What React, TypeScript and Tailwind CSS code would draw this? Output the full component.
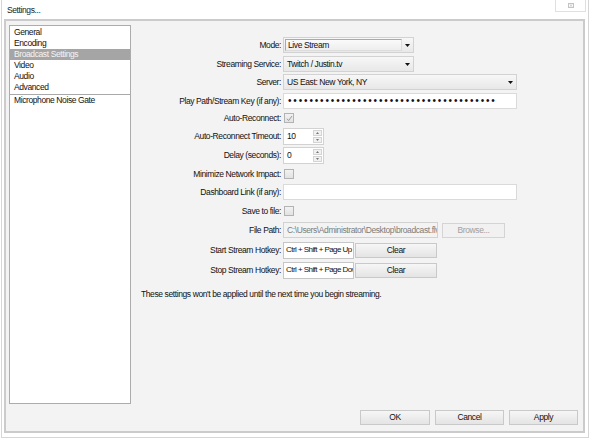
import React from 'react';

const font = { fontFamily: '"Liberation Sans", Arial, sans-serif' };

function Arrow() {
  return (
    <svg width="5" height="3" viewBox="0 0 5 3" className="block">
      <path d="M0 0h5L2.5 3z" fill="#111" />
    </svg>
  );
}

function Combo({ text, width, editable }: { text: string; width: string; editable?: boolean }) {
  return (
    <div className={`${width} h-[16px] flex items-stretch border border-[#d2d2d2] bg-gradient-to-b from-[#f7f7f7] to-[#e8e8e8]`}>
      {editable ? (
        <div className="w-[117px] my-[1px] ml-[1px] border border-[#a9a9a9] border-r-[#dcdcdc] border-b-[#dcdcdc] bg-gradient-to-b from-[#fafafa] to-[#eeeeee] flex items-center pl-[2px]">
          {text}
        </div>
      ) : (
        <div className="flex-1 flex items-center pl-[3px]">{text}</div>
      )}
      <div className={`${editable ? 'flex-1' : 'w-[12px]'} flex items-center justify-center`}>
        <Arrow />
      </div>
    </div>
  );
}

function Check({ checked }: { checked?: boolean }) {
  return (
    <div className="ml-[1px] w-[10px] h-[10px] border border-[#b3b3b3] bg-gradient-to-b from-[#f2f2f2] to-[#e2e2e2] flex items-center justify-center">
      {checked && (
        <svg width="7" height="7" viewBox="0 0 7 7">
          <path d="M1 3.8L2.6 5.6L6 1" fill="none" stroke="#9a9a9a" strokeWidth="1" />
        </svg>
      )}
    </div>
  );
}

function Spin({ value }: { value: string }) {
  return (
    <div className="w-[41px] h-[17px] flex border border-[#d2d2d2] bg-white">
      <div className="w-[28px] flex items-center pl-[3px]">{value}</div>
      <div className="flex-1 flex flex-col gap-[1px] p-[1px]">
        <div className="flex-1 border border-[#d4d4d4] bg-[#f1f1f1] flex items-center justify-center">
          <svg width="3" height="2" viewBox="0 0 3 2"><path d="M0 2h3L1.5 0z" fill="#777" /></svg>
        </div>
        <div className="flex-1 border border-[#d4d4d4] bg-[#f1f1f1] flex items-center justify-center">
          <svg width="3" height="2" viewBox="0 0 3 2"><path d="M0 0h3L1.5 2z" fill="#777" /></svg>
        </div>
      </div>
    </div>
  );
}

function Btn({ children, width, disabled }: { children: React.ReactNode; width: string; disabled?: boolean }) {
  return (
    <div
      className={`${width} h-[15px] flex items-center justify-center border ${
        disabled
          ? 'border-[#d4d4d4] bg-[#f1f1f1] text-[#a0a0a0]'
          : 'border-[#c9c9c9] bg-gradient-to-b from-[#f6f6f6] to-[#e4e4e4] text-[#111]'
      }`}
    >
      {children}
    </div>
  );
}

function Row({ label, mt, children }: { label: string; mt: string; children: React.ReactNode }) {
  return (
    <div className={`flex items-center h-[16px] ${mt}`}>
      <div className="w-[150px] text-right whitespace-nowrap">{label}</div>
      <div className="ml-[2px] flex items-center">{children}</div>
    </div>
  );
}

function Hotkey({ text }: { text: string }) {
  return (
    <div className="w-[71px] h-[17px] border border-[#c6c6c6] bg-white flex items-center pl-[2px] overflow-hidden whitespace-nowrap text-[8px] tracking-[-0.55px]">
      {text}
    </div>
  );
}

const pages = ['General', 'Encoding', 'Broadcast Settings', 'Video', 'Audio', 'Advanced'];

export default function App() {
  return (
    <div
      className="w-[590px] h-[439px] bg-white px-[1px] pb-[1px] text-[8.5px] tracking-[-0.4px] text-[#111] leading-none"
      style={font}
    >
      <div className="h-[438px] border-x border-b border-[#d6d6d6]">
        <div className="h-[19px] flex justify-between items-start">
          <div className="pl-[5px] pt-[6px] text-[#222]">Settings...</div>
          <div className="mr-[2px] w-[31px] h-[12px] border border-t-0 border-[#e0e0e0] flex items-center justify-center">
            <svg width="6" height="5" viewBox="0 0 6 5">
              <rect x="0.5" y="0.5" width="5" height="4" fill="none" stroke="#c4c4c4" strokeWidth="1" />
              <path d="M1.5 1.2L4.5 3.8M4.5 1.2L1.5 3.8" stroke="#c4c4c4" strokeWidth="0.8" />
            </svg>
          </div>
        </div>

        <div className="ml-[2px] w-[581px] h-[414px] border-2 border-[#cbcbcb] bg-[#f3f3f3] flex flex-col justify-between">
          <div className="flex items-start">
            <div className="ml-[3px] mt-[4px] w-[122px] h-[379px] border border-[#acacac] bg-white pt-[1px]">
              {pages.map((p) => (
                <div
                  key={p}
                  className={`h-[11px] flex items-center pl-[4px] ${
                    p === 'Broadcast Settings' ? 'bg-[#a5a5a5] text-[#f4f4f4]' : ''
                  }`}
                >
                  {p}
                </div>
              ))}
              <div className="h-[1px] bg-[#a9a9a9] mt-[1px]" />
              <div className="h-[11px] flex items-center pl-[4px]">Microphone Noise Gate</div>
            </div>

            <div className="flex-1 flex flex-col pt-[16px]">
              <Row label="Mode:" mt="mt-0">
                <Combo text="Live Stream" width="w-[131px]" editable />
              </Row>
              <Row label="Streaming Service:" mt="mt-[3px]">
                <Combo text="Twitch / Justin.tv" width="w-[131px]" />
              </Row>
              <Row label="Server:" mt="mt-[2px]">
                <Combo text="US East: New York, NY" width="w-[234px]" />
              </Row>
              <Row label="Play Path/Stream Key (if any):" mt="mt-[3px]">
                <div className="w-[234px] h-[16px] border border-[#dadada] bg-white flex items-center pl-[4px] overflow-hidden">
                  <span className="text-[10px] tracking-[1.85px] text-[#111]">
                    {'•'.repeat(39)}
                  </span>
                </div>
              </Row>
              <Row label="Auto-Reconnect:" mt="mt-[1px]">
                <Check checked />
              </Row>
              <Row label="Auto-Reconnect Timeout:" mt="mt-[2px]">
                <Spin value="10" />
              </Row>
              <Row label="Delay (seconds):" mt="mt-[3px]">
                <Spin value="0" />
              </Row>
              <Row label="Minimize Network Impact:" mt="mt-[3px]">
                <Check />
              </Row>
              <Row label="Dashboard Link (if any):" mt="mt-[2px]">
                <div className="w-[234px] h-[16px] border border-[#dadada] bg-white" />
              </Row>
              <Row label="Save to file:" mt="mt-[3px]">
                <Check />
              </Row>
              <Row label="File Path:" mt="mt-[3px]">
                <div className="w-[155px] h-[16px] border border-[#d2d2d2] bg-[#f3f3f3] text-[#7c7c7c] flex items-center pl-[3px] overflow-hidden whitespace-nowrap">
                  C:\Users\Administrator\Desktop\broadcast.flv
                </div>
                <div className="ml-[4px]">
                  <Btn width="w-[63px]" disabled>
                    Browse...
                  </Btn>
                </div>
              </Row>
              <Row label="Start Stream Hotkey:" mt="mt-[4px]">
                <Hotkey text="Ctrl + Shift + Page Up" />
                <div className="ml-[1px]">
                  <Btn width="w-[82px]">Clear</Btn>
                </div>
              </Row>
              <Row label="Stop Stream Hotkey:" mt="mt-[4px]">
                <Hotkey text="Ctrl + Shift + Page Down" />
                <div className="ml-[1px]">
                  <Btn width="w-[82px]">Clear</Btn>
                </div>
              </Row>
              <div className="mt-[11px] h-[10px] flex items-center pl-[10px]">
                These settings won't be applied until the next time you begin streaming.
              </div>
            </div>
          </div>

          <div className="self-end flex gap-[5px] mr-[5px] mb-[6px]">
            <Btn width="w-[70px]">OK</Btn>
            <Btn width="w-[69px]">Cancel</Btn>
            <Btn width="w-[69px]">Apply</Btn>
          </div>
        </div>
      </div>
    </div>
  );
}
